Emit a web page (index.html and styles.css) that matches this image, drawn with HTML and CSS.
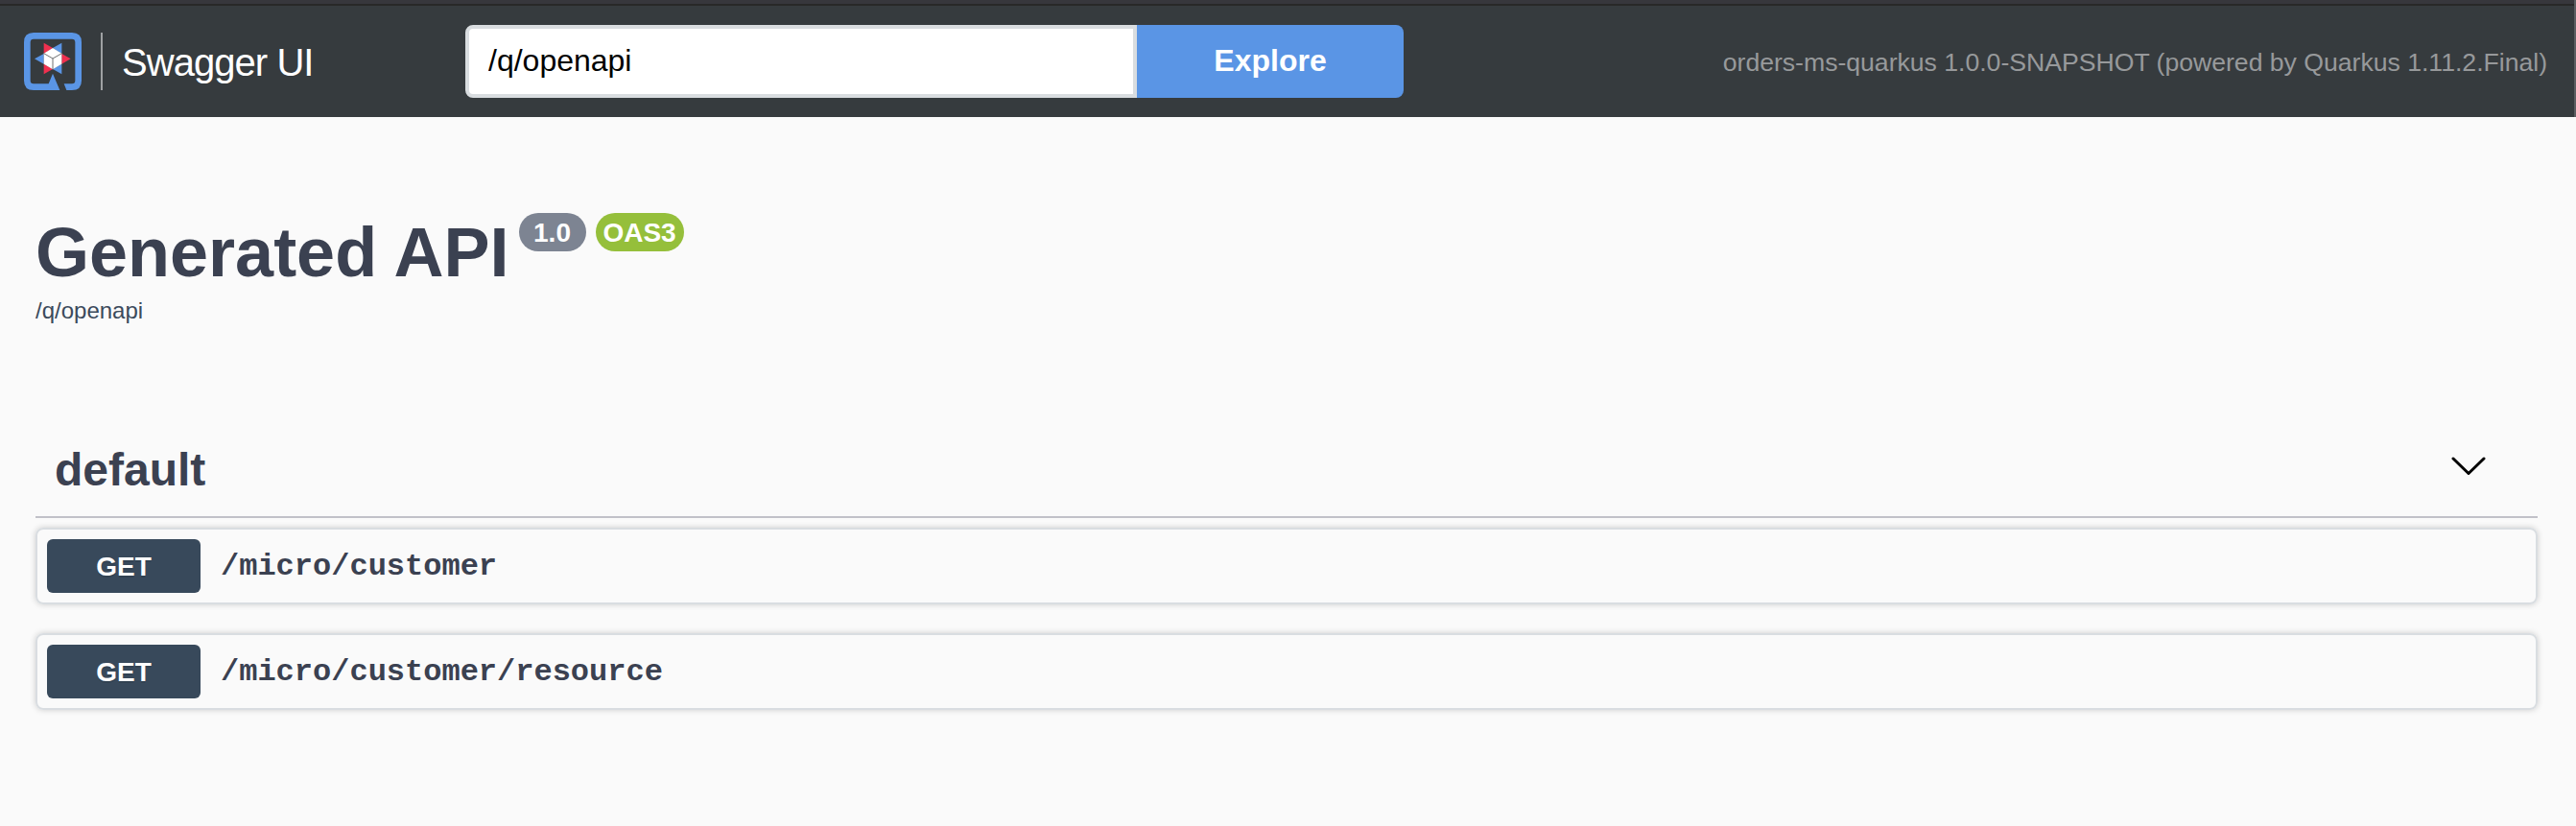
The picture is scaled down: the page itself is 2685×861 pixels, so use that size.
FILE: index.html
```html
<!DOCTYPE html>
<html lang="en">
<head>
<meta charset="utf-8">
<title>Swagger UI</title>
<link rel="stylesheet" href="styles.css">
</head>
<body>
<header class="topbar">
  <a class="brand">
    <svg class="logo" viewBox="0 0 180 180" width="60" height="60" aria-hidden="true">
      <path fill="#5a95e5" d="M30 0H150Q180 0 180 30V150Q180 180 150 180H133L125 160H150Q160 160 160 150V30Q160 20 150 20H30Q20 20 20 30V150Q20 160 30 160H77L90 128L112 180H30Q0 180 0 150V30Q0 0 30 0Z"/>
      <path fill="#f0304f" d="M62 32L90 48L62 66ZM146 82L118 66V98ZM62 130V98L90 114Z"/>
      <path fill="#5a95e5" d="M118 32L90 48L118 66ZM33 82L62 66V98ZM118 130V98L90 114Z"/>
      <path fill="#fff" d="M90 48L118 65V98L90 115L62 98V65Z"/>
      <path fill="none" stroke="#6e7072" stroke-width="3" d="M62 65L90 81L118 65M90 81V115"/>
    </svg>
    <span class="divider"></span>
    <span class="brand-name">Swagger UI</span>
  </a>
  <form class="search">
    <input class="search-input" type="text" value="/q/openapi">
    <button class="search-button" type="button">Explore</button>
  </form>
  <span class="app-info">orders-ms-quarkus 1.0.0-SNAPSHOT (powered by Quarkus 1.11.2.Final)</span>
</header>
<main class="content">
  <section class="info">
    <div class="title-row">
      <h1 class="title">Generated API</h1>
      <span class="badge version">1.0</span>
      <span class="badge oas">OAS3</span>
    </div>
    <a class="spec-link">/q/openapi</a>
  </section>
  <section class="operations">
    <div class="tag">
      <h2 class="tag-name">default</h2>
      <svg class="chevron" viewBox="0 0 36 20" width="36" height="20" aria-hidden="true">
        <path d="M2 2L18 17.5L34 2" fill="none" stroke="#000" stroke-width="3" stroke-linecap="round" stroke-linejoin="round"/>
      </svg>
    </div>
    <div class="operation">
      <span class="method">GET</span>
      <span class="path">/micro/customer</span>
    </div>
    <div class="operation">
      <span class="method">GET</span>
      <span class="path">/micro/customer/resource</span>
    </div>
  </section>
</main>
</body>
</html>
```
FILE: styles.css
```css
* {
  box-sizing: border-box;
}

body {
  margin: 0;
  min-height: 861px;
  background: #fafafa;
  color: #3b4151;
  font-family: "Liberation Sans", Arial, sans-serif;
}

.topbar {
  display: flex;
  align-items: center;
  height: 122px;
  padding: 6px 28px 0 25px;
  border-right: 2px solid #5b5e61;
  background: linear-gradient(#37373c 4px, #282828 4px, #282828 6px, #363b3e 6px);
}

.brand {
  display: flex;
  width: 460px;
  align-items: center;
}

.logo {
  display: block;
}

.divider {
  width: 2px;
  height: 60px;
  margin: 0 20px;
  background: #9fa1a3;
}

.brand-name {
  padding-top: 3px;
  color: #fff;
  font-size: 40px;
  line-height: 57px;
  letter-spacing: -0.95px;
  white-space: nowrap;
}

.search {
  display: flex;
  width: 978px;
  height: 76px;
}

.search-input {
  width: 700px;
  padding: 0 20px 2px;
  border: 4px solid #d9dde0;
  border-radius: 8px 0 0 8px;
  background: #fff;
  color: #000;
  font: 32px "Liberation Sans", Arial, sans-serif;
  outline: none;
}

.search-button {
  flex: 1;
  padding: 0 0 2px;
  border: 0;
  border-radius: 0 8px 8px 0;
  background: #5a95e5;
  color: #fff;
  font: bold 32px "Liberation Sans", Arial, sans-serif;
}

.app-info {
  margin-left: auto;
  padding-top: 2px;
  color: #97999b;
  font-size: 26.67px;
  line-height: 38px;
  letter-spacing: -0.03px;
  white-space: nowrap;
}

.content {
  padding: 100px 40px 0 37px;
}

.title-row {
  display: flex;
  align-items: flex-start;
  height: 82px;
}

.title {
  margin: 0 10px 0 0;
  font-size: 72px;
  line-height: 82px;
  white-space: nowrap;
}

.badge {
  height: 40px;
  margin-right: 10px;
  border-radius: 20px;
  color: #fff;
  font-size: 28px;
  font-weight: bold;
  line-height: 41px;
  text-align: center;
}

.version {
  width: 70px;
  background: #7d8492;
}

.oas {
  width: 92px;
  background: #95bf3b;
}

.spec-link {
  display: block;
  margin-top: 6px;
  color: #3b4a5c;
  font-size: 24px;
  line-height: 28px;
}

.operations {
  margin-top: 104px;
}

.tag {
  display: flex;
  align-items: center;
  justify-content: space-between;
  height: 98px;
  margin-bottom: 10px;
  padding: 0 54px 0 20px;
  border-bottom: 2px solid #c1c1c8;
}

.tag-name {
  margin: 0;
  font-size: 48px;
  line-height: 56px;
}

.chevron {
  margin-bottom: 9px;
}

.operation {
  display: flex;
  align-items: center;
  height: 80px;
  margin-bottom: 30px;
  padding: 0 10px;
  border: 2px solid #d9dde1;
  border-radius: 8px;
  box-shadow: 0 0 6px rgba(0, 0, 0, 0.19);
}

.method {
  width: 160px;
  height: 56px;
  border-radius: 6px;
  background: #38495b;
  color: #fff;
  font-size: 28px;
  font-weight: bold;
  line-height: 57px;
  text-align: center;
  text-shadow: 0 2px 0 rgba(0, 0, 0, 0.1);
}

.path {
  margin-left: 21px;
  padding-top: 2px;
  font-family: "Liberation Mono", "Courier New", monospace;
  font-size: 32px;
  font-weight: bold;
  line-height: 38px;
}
```
